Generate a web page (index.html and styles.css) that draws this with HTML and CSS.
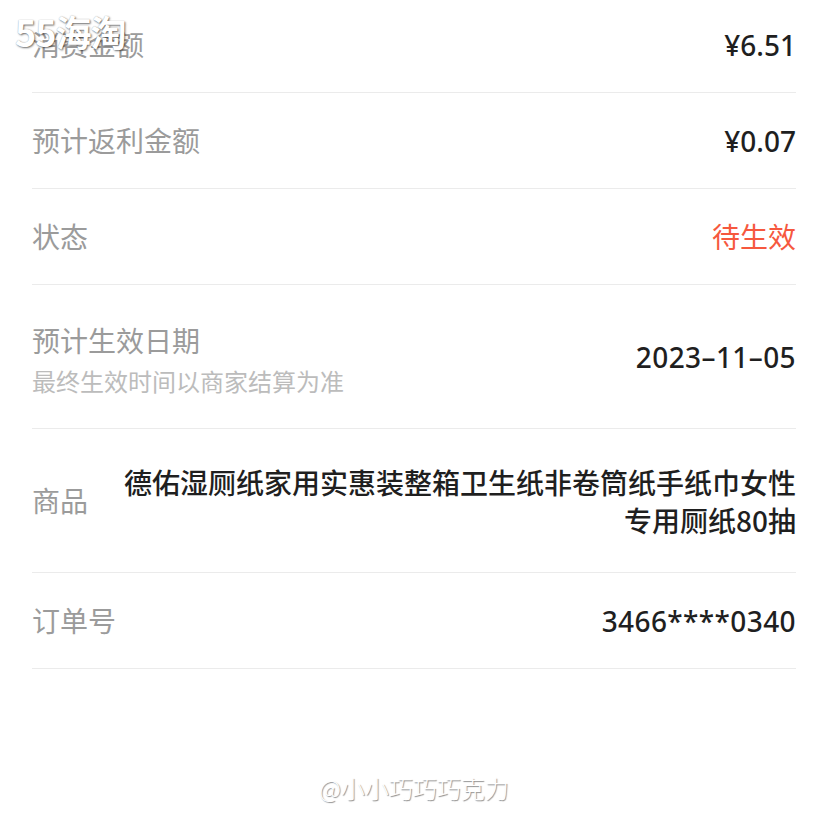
FILE: index.html
```html
<!DOCTYPE html>
<html lang="zh-CN">
<head>
<meta charset="utf-8">
<link rel="stylesheet" href="styles.css">
</head>
<body>
<div class="page">
  <div class="list">
    <div class="row">
      <div class="label">消费金额</div>
      <div class="value">¥6.51</div>
    </div>
    <div class="row">
      <div class="label">预计返利金额</div>
      <div class="value">¥0.07</div>
    </div>
    <div class="row">
      <div class="label">状态</div>
      <div class="value status">待生效</div>
    </div>
    <div class="row tall">
      <div class="label-group">
        <div class="label">预计生效日期</div>
        <div class="sub">最终生效时间以商家结算为准</div>
      </div>
      <div class="value num">2023–11–05</div>
    </div>
    <div class="row tall">
      <div class="label">商品</div>
      <div class="value product">德佑湿厕纸家用实惠装整箱卫生纸非卷筒纸手纸巾女性专用厕纸80抽</div>
    </div>
    <div class="row">
      <div class="label">订单号</div>
      <div class="value num">3466****0340</div>
    </div>
  </div>
  <div class="wm-top">55海淘</div>
  <div class="wm-bottom">@小小巧巧巧克力</div>
</div>
</body>
</html>
```
FILE: styles.css
```css
* { box-sizing: border-box; }
html, body {
  margin: 0;
  padding: 0;
  background: #ffffff;
}
body {
  font-family: "Noto Sans", "Noto Sans CJK SC", sans-serif;
  width: 828px;
  height: 828px;
  overflow: hidden;
}
.page {
  position: relative;
  width: 828px;
  height: 828px;
}
.list {
  margin: -3px 32px 0 32px;
}
.row {
  display: flex;
  align-items: center;
  justify-content: space-between;
  height: 96px;
  border-bottom: 1px solid #ebebeb;
}
.row.tall {
  height: 144px;
}
.label {
  font-size: 28px;
  line-height: 40px;
  color: #9b9b9b;
  white-space: nowrap;
  flex-shrink: 0;
}
.label-group {
  display: flex;
  flex-direction: column;
  padding-top: 6px;
}
.sub {
  margin-top: 4px;
  font-size: 24px;
  line-height: 34px;
  color: #bcbcbc;
}
.value {
  font-size: 28px;
  line-height: 40px;
  color: #1f1f1f;
  font-weight: 500;
  text-align: right;
}
.value.num {
  letter-spacing: 0.4px;
}
.status {
  color: #f6583e;
  font-weight: 400;
}
.product {
  margin-left: 28px;
  line-height: 38px;
  font-family: "Noto Sans CJK SC", sans-serif;
}
.wm-top {
  position: absolute;
  left: 15px;
  top: 12px;
  font-family: "Noto Sans CJK SC", sans-serif;
  font-size: 36px;
  line-height: 44px;
  font-weight: 700;
  color: #ffffff;
  text-shadow: 1px 1px 2px rgba(0,0,0,0.55), 0 0 1px rgba(0,0,0,0.3);
  letter-spacing: -1px;
}
.wm-bottom {
  position: absolute;
  left: 319px;
  top: 775px;
  font-family: "Noto Sans CJK SC", sans-serif;
  font-size: 24px;
  line-height: 32px;
  font-weight: 300;
  color: #ffffff;
  text-shadow: 1px 1px 1px rgba(0,0,0,0.45);
}
```
